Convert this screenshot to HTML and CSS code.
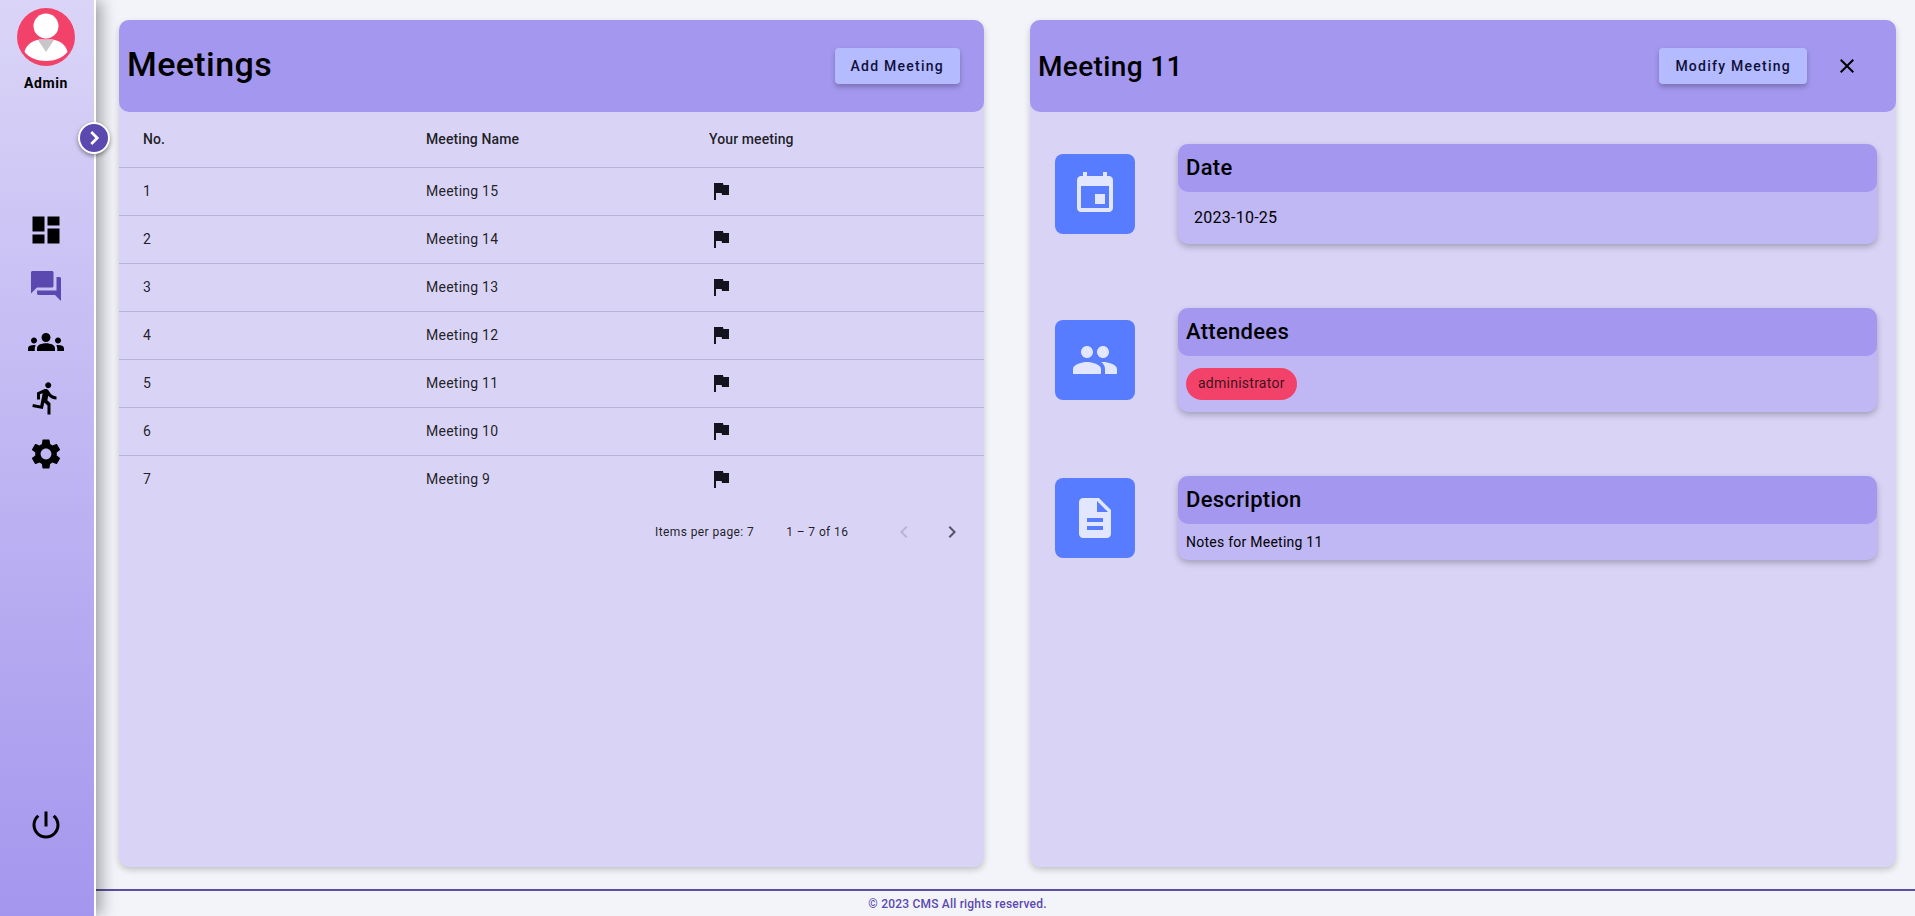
FILE: index.html
```html
<!DOCTYPE html>
<html lang="en">
<head>
    <meta charset="UTF-8">
    <title>Meetings</title>
    <link rel="stylesheet" href="styles.css">
</head>
<body>
    <div class="app">
        <aside class="sidebar">
            <div class="profile">
                <svg class="avatar" viewBox="0 0 58 58">
                    <circle cx="29" cy="29" r="29" fill="#f2426a"/>
                    <circle cx="29" cy="18" r="12.5" fill="#fff"/>
                    <path d="M7.5 44c1-7 9-12 15-12.500h13c6 .5 14 5.500 15 12.500-5 6-13 9-21.500 9S12.500 50 7.500 44z" fill="#fff"/>
                    <path d="M21 32h16l-8 12z" fill="#c9c6cb"/>
                </svg>
                <div class="profile-name">Admin</div>
            </div>
            <button class="toggle">
                <svg viewBox="0 0 24 24"><path d="M9 5.500l6.500 6.500L9 18.500" fill="none" stroke="#fff" stroke-width="3"/></svg>
            </button>
            <nav class="nav">
                <svg class="nav-icon" viewBox="0 0 24 24"><path d="M3 13h8V3H3v10zm0 8h8v-6H3v6zm10 0h8V11h-8v10zm0-18v6h8V3h-8z"/></svg>
                <svg class="nav-icon active" viewBox="0 0 24 24"><path d="M21 6h-2v9H6v2c0 .55.45 1 1 1h11l4 4V7c0-.55-.45-1-1-1zm-4 6V3c0-.55-.45-1-1-1H3c-.55 0-1 .45-1 1v14l4-4h10c.55 0 1-.45 1-1z"/></svg>
                <svg class="nav-icon" viewBox="0 0 24 24"><path d="M12 12.750c1.630 0 3.070.39 4.240.9 1.080.48 1.760 1.560 1.760 2.730V18H6v-1.610c0-1.180.68-2.260 1.760-2.730 1.170-.52 2.610-.91 4.240-.91zM4 13c1.100 0 2-.9 2-2s-.9-2-2-2-2 .9-2 2 .9 2 2 2zm1.130 1.100c-.37-.06-.74-.1-1.130-.1-.99 0-1.930.21-2.780.58C.48 14.900 0 15.620 0 16.430V18h4.500v-1.610c0-.83.23-1.610.63-2.290zM20 13c1.100 0 2-.9 2-2s-.9-2-2-2-2 .9-2 2 .9 2 2 2zm4 3.430c0-.81-.48-1.530-1.220-1.850-.85-.37-1.790-.58-2.780-.58-.39 0-.76.04-1.130.1.4.68.63 1.460.63 2.290V18H24v-1.570zM12 6c1.660 0 3 1.340 3 3s-1.340 3-3 3-3-1.340-3-3 1.340-3 3-3z"/></svg>
                <svg class="nav-icon" viewBox="0 0 24 24"><path d="M13.490 5.480c1.100 0 2-.9 2-2s-.9-2-2-2-2 .9-2 2 .9 2 2 2zm-3.600 13.900l1-4.400 2.100 2v6h2v-7.500l-2.100-2 .6-3c1.300 1.500 3.300 2.500 5.500 2.500v-2c-1.900 0-3.500-1-4.300-2.400l-1-1.600c-.4-.6-1-1-1.700-1-.3 0-.5.1-.8.1l-5.200 2.200v4.700h2v-3.400l1.800-.7-1.600 8.100-4.900-1-.4 2 7 1.400z"/></svg>
                <svg class="nav-icon" viewBox="0 0 24 24"><path d="M19.140 12.940c.04-.3.06-.61.06-.94 0-.32-.02-.64-.07-.94l2.030-1.580c.18-.14.23-.41.12-.61l-1.920-3.320c-.12-.22-.37-.29-.59-.22l-2.390.96c-.5-.38-1.030-.7-1.620-.94l-.36-2.540c-.04-.24-.24-.41-.48-.41h-3.840c-.24 0-.43.17-.47.41l-.36 2.540c-.59.24-1.130.57-1.620.94l-2.390-.96c-.22-.08-.47 0-.59.22L2.740 8.870c-.12.21-.08.47.12.61l2.030 1.580c-.05.3-.09.63-.09.94s.02.64.07.94l-2.030 1.580c-.18.14-.23.41-.12.61l1.920 3.320c.12.22.37.29.59.22l2.390-.96c.5.38 1.030.7 1.620.94l.36 2.540c.05.24.24.41.48.41h3.840c.24 0 .44-.17.47-.41l.36-2.540c.59-.24 1.130-.56 1.620-.94l2.390.96c.22.08.47 0 .59-.22l1.920-3.320c.12-.22.07-.47-.12-.61l-2.010-1.580zM12 15.600c-1.980 0-3.600-1.620-3.600-3.600s1.620-3.600 3.600-3.600 3.600 1.620 3.600 3.600-1.620 3.600-3.600 3.600z"/></svg>
            </nav>
            <svg class="nav-icon power" viewBox="0 0 24 24"><path d="M13 3h-2v10h2V3zm4.830 2.170l-1.420 1.420C17.990 7.860 19 9.810 19 12c0 3.870-3.130 7-7 7s-7-3.130-7-7c0-2.190 1.010-4.140 2.580-5.420L6.170 5.170C4.230 6.820 3 9.260 3 12c0 4.970 4.030 9 9 9s9-4.030 9-9c0-2.740-1.230-5.180-3.170-6.830z"/></svg>
        </aside>

        <main class="content">
            <section class="card card-list">
                <header class="card-header">
                    <h1 class="title-large">Meetings</h1>
                    <button class="action">Add Meeting</button>
                </header>
                <div class="row head"><div>No.</div><div>Meeting Name</div><div>Your meeting</div></div>
                <div class="row"><div>1</div><div>Meeting 15</div><div><svg class="flag" viewBox="0 0 24 24"><path d="M14.400 6L14 4H5v17h2v-7h5.600l.4 2h7V6z"/></svg></div></div>
                <div class="row"><div>2</div><div>Meeting 14</div><div><svg class="flag" viewBox="0 0 24 24"><path d="M14.400 6L14 4H5v17h2v-7h5.600l.4 2h7V6z"/></svg></div></div>
                <div class="row"><div>3</div><div>Meeting 13</div><div><svg class="flag" viewBox="0 0 24 24"><path d="M14.400 6L14 4H5v17h2v-7h5.600l.4 2h7V6z"/></svg></div></div>
                <div class="row"><div>4</div><div>Meeting 12</div><div><svg class="flag" viewBox="0 0 24 24"><path d="M14.400 6L14 4H5v17h2v-7h5.600l.4 2h7V6z"/></svg></div></div>
                <div class="row"><div>5</div><div>Meeting 11</div><div><svg class="flag" viewBox="0 0 24 24"><path d="M14.400 6L14 4H5v17h2v-7h5.600l.4 2h7V6z"/></svg></div></div>
                <div class="row"><div>6</div><div>Meeting 10</div><div><svg class="flag" viewBox="0 0 24 24"><path d="M14.400 6L14 4H5v17h2v-7h5.600l.4 2h7V6z"/></svg></div></div>
                <div class="row last"><div>7</div><div>Meeting 9</div><div><svg class="flag" viewBox="0 0 24 24"><path d="M14.400 6L14 4H5v17h2v-7h5.600l.4 2h7V6z"/></svg></div></div>
                <div class="paginator">
                    <span class="per-page">Items per page: 7</span>
                    <span class="range">1 – 7 of 16</span>
                    <svg class="page-btn disabled" viewBox="0 0 24 24"><path d="M15.410 7.410L14 6l-6 6 6 6 1.410-1.410L10.830 12z"/></svg>
                    <svg class="page-btn" viewBox="0 0 24 24"><path d="M10 6L8.590 7.410 13.170 12l-4.580 4.590L10 18l6-6z"/></svg>
                </div>
            </section>

            <section class="card">
                <header class="card-header">
                    <h2 class="title-medium">Meeting 11</h2>
                    <div class="header-actions">
                        <button class="action">Modify Meeting</button>
                        <svg class="close" viewBox="0 0 24 24"><path d="M19 6.410L17.590 5 12 10.590 6.410 5 5 6.410 10.590 12 5 17.590 6.410 19 12 13.410 17.590 19 19 17.590 13.410 12z"/></svg>
                    </div>
                </header>
                <div class="details">
                    <div class="detail">
                        <div class="detail-icon"><svg viewBox="0 0 24 24"><path d="M17 12h-5v5h5v-5zM16 1v2H8V1H6v2H5c-1.110 0-1.990.9-1.990 2L3 19c0 1.100.89 2 2 2h14c1.100 0 2-.9 2-2V5c0-1.100-.9-2-2-2h-1V1h-2zm3 18H5V8h14v11z"/></svg></div>
                        <div class="info">
                            <h3 class="info-title">Date</h3>
                            <div class="info-date">2023-10-25</div>
                        </div>
                    </div>
                    <div class="detail">
                        <div class="detail-icon"><svg viewBox="0 0 24 24"><path d="M16 11c1.660 0 2.990-1.340 2.990-3S17.660 5 16 5c-1.660 0-3 1.340-3 3s1.340 3 3 3zm-8 0c1.660 0 2.990-1.340 2.990-3S9.660 5 8 5C6.340 5 5 6.340 5 8s1.340 3 3 3zm0 2c-2.330 0-7 1.170-7 3.500V19h14v-2.500c0-2.330-4.670-3.500-7-3.500zm8 0c-.29 0-.62.02-.97.05 1.160.84 1.970 1.970 1.970 3.450V19h6v-2.500c0-2.330-4.670-3.500-7-3.500z"/></svg></div>
                        <div class="info">
                            <h3 class="info-title">Attendees</h3>
                            <div class="info-chips"><span class="chip">administrator</span></div>
                        </div>
                    </div>
                    <div class="detail">
                        <div class="detail-icon"><svg viewBox="0 0 24 24"><path d="M14 2H6c-1.100 0-1.990.9-1.990 2L4 20c0 1.100.89 2 2 2h12c1.100 0 2-.9 2-2V8l-6-6zm2 16H8v-2h8v2zm0-4H8v-2h8v2zm-3-5V3.500L18.500 9H13z"/></svg></div>
                        <div class="info">
                            <h3 class="info-title">Description</h3>
                            <div class="info-notes">Notes for Meeting 11</div>
                        </div>
                    </div>
                </div>
            </section>
        </main>

        <footer class="footer">© 2023 CMS All rights reserved.</footer>
    </div>
</body>
</html>
```

FILE: styles.css
```css
* {
    box-sizing: border-box;
}

html, body {
    height: 100%;
    margin: 0;
}

body {
    font-family: 'Roboto', sans-serif;
    background-color: #f3f4f9;
    color: #000;
    overflow: hidden;
}

.app {
    display: grid;
    grid-template-columns: 96px 1fr;
    grid-template-rows: 889px 27px;
    height: 100%;
}

/* sidebar */
.sidebar {
    grid-column: 1;
    grid-row: 1 / 3;
    z-index: 2;
    position: relative;
    display: flex;
    flex-direction: column;
    align-items: center;
    padding-right: 2px;
    background: linear-gradient(180deg, #dad5f7 0%, #a496ee 100%);
    border-right: 2px solid #fff;
    box-shadow: 5px 0 15px rgba(0, 0, 0, 0.35);
}

.profile {
    display: flex;
    flex-direction: column;
    align-items: center;
    padding-top: 8px;
}

.avatar {
    width: 58px;
    height: 58px;
}

.profile-name {
    margin-top: 9px;
    font-size: 14px;
    line-height: 16px;
    font-weight: 700;
    letter-spacing: 0.6px;
}

.toggle {
    position: absolute;
    top: 122px;
    left: 78px;
    width: 32px;
    height: 32px;
    padding: 3px;
    background-color: #5b49b0;
    border: 2px solid #fff;
    border-radius: 50%;
    box-shadow: 0 2px 4px rgba(0, 0, 0, 0.4);
}

.toggle svg {
    display: block;
    width: 22px;
    height: 22px;
}

.nav {
    display: flex;
    flex-direction: column;
    gap: 20px;
    margin-top: 121px;
}

.nav-icon {
    display: block;
    width: 36px;
    height: 36px;
    fill: #000;
}

.nav-icon.active {
    fill: #5b49b0;
}

.power {
    margin-top: auto;
    margin-bottom: 73px;
}

/* main */
.content {
    grid-column: 2;
    grid-row: 1;
    display: flex;
    gap: 46px;
    padding: 20px 19px 22px 23px;
}

.card {
    flex: 1;
    background-color: #d9d4f6;
    border-radius: 10px;
    box-shadow: 0 3px 6px rgba(0, 0, 0, 0.2);
}

.card-list {
    flex: 0 0 865px;
}

.card-header {
    display: flex;
    align-items: center;
    justify-content: space-between;
    height: 92px;
    padding: 0 24px 0 8px;
    background-color: #a497ef;
    border-radius: 10px;
}

.title-large {
    margin: 0 0 4px;
    font-size: 34px;
    font-weight: 500;
    letter-spacing: 0.4px;
}

.title-medium {
    margin: 0;
    font-size: 28px;
    font-weight: 500;
    letter-spacing: 0.35px;
}

.action {
    height: 36px;
    padding: 0 16px;
    font-family: 'Roboto', sans-serif;
    font-size: 14px;
    font-weight: 500;
    letter-spacing: 1.25px;
    color: #10103a;
    background-color: #b4bcff;
    border: none;
    border-radius: 4px;
    box-shadow: 0 3px 5px rgba(0, 0, 0, 0.25);
}

.header-actions {
    display: flex;
    align-items: center;
    gap: 28px;
}

.close {
    display: block;
    width: 24px;
    height: 24px;
    margin-right: 13px;
    fill: #000;
}

/* table */
.row {
    display: grid;
    grid-template-columns: 283px 283px 1fr;
    align-items: center;
    height: 48px;
    padding-left: 24px;
    padding-bottom: 2px;
    font-size: 14px;
    letter-spacing: 0.25px;
    color: rgba(0, 0, 0, 0.87);
    border-bottom: 1px solid #b8b3d8;
}

.row.head {
    height: 56px;
    font-weight: 500;
    letter-spacing: 0.1px;
}

.row.last {
    border-bottom: none;
}

.flag {
    display: block;
    width: 24px;
    height: 24px;
    fill: #14141f;
}

.paginator {
    display: flex;
    align-items: center;
    height: 56px;
    padding-left: 536px;
    font-size: 12px;
    letter-spacing: 0.4px;
    color: rgba(0, 0, 0, 0.87);
}

.range {
    margin-left: 32px;
}

.page-btn {
    width: 24px;
    height: 24px;
    margin-left: 36px;
    fill: #55536a;
}

.page-btn.disabled {
    margin-left: 44px;
    margin-right: -12px;
    fill: #b9b6d2;
}

/* details */
.details {
    display: flex;
    flex-direction: column;
    gap: 64px;
    padding: 32px 19px 0 25px;
}

.detail {
    display: flex;
    align-items: center;
    gap: 43px;
}

.detail-icon {
    display: flex;
    align-items: center;
    justify-content: center;
    flex-shrink: 0;
    width: 80px;
    height: 80px;
    background-color: #587cff;
    border-radius: 8px;
}

.detail-icon svg {
    width: 48px;
    height: 48px;
    fill: #e2e7ff;
}

.info {
    flex: 1;
    background-color: #c0b8f5;
    border-radius: 10px;
    box-shadow: 0 3px 6px rgba(0, 0, 0, 0.25);
}

.info-title {
    margin: 0;
    height: 48px;
    padding-left: 8px;
    font-size: 22px;
    font-weight: 500;
    letter-spacing: 0.3px;
    line-height: 48px;
    background-color: #a497ef;
    border-radius: 10px;
}

.info-date {
    height: 52px;
    padding-left: 16px;
    font-size: 16px;
    letter-spacing: 0.25px;
    line-height: 52px;
}

.info-chips {
    padding: 12px 8px;
}

.chip {
    display: inline-block;
    height: 32px;
    padding: 0 12px;
    font-size: 14px;
    letter-spacing: 0.25px;
    line-height: 31px;
    color: rgba(0, 0, 0, 0.75);
    background-color: #f2426a;
    border-radius: 16px;
}

.info-notes {
    height: 36px;
    padding-left: 8px;
    font-size: 14px;
    letter-spacing: 0.25px;
    line-height: 36px;
}

.footer {
    grid-column: 1 / 3;
    grid-row: 2;
    font-size: 12px;
    font-weight: 500;
    line-height: 27px;
    text-align: center;
    letter-spacing: 0.2px;
    color: #5b49b0;
    border-top: 2px solid #5d4f9f;
}
```
